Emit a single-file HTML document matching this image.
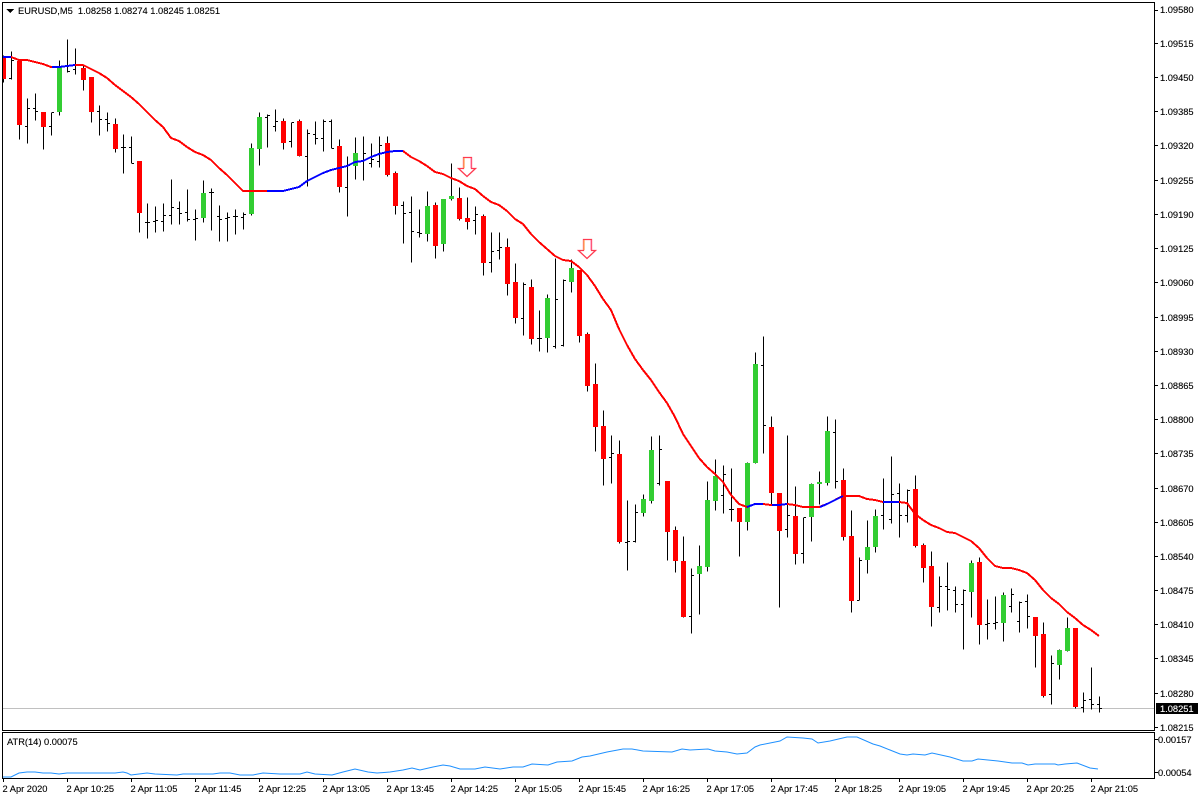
<!DOCTYPE html>
<html><head><meta charset="utf-8"><title>EURUSD,M5</title>
<style>
html,body{margin:0;padding:0;background:#fff;width:1200px;height:800px;overflow:hidden}
svg{display:block}
text{font-family:"Liberation Sans",sans-serif;font-size:9.3px;fill:#000;white-space:pre;stroke:#000;stroke-width:.12px}
.c{shape-rendering:crispEdges}
</style></head><body>
<svg width="1200" height="800" viewBox="0 0 1200 800" xmlns="http://www.w3.org/2000/svg">
<rect width="1200" height="800" fill="#fff"/>
<g class="c">
<path d="M3 708.5H1154" stroke="#c0c0c0" fill="none"/>
<g transform="translate(0 .5)" fill="none" stroke="#000" stroke-width="1">
<path d="M3.5 55V82M11.5 51V79M9 78h2M12 60h2M19.5 60V139M27.5 98V143M25 126h2M28 108h2M35.5 93V120M33 108h2M36 111h2M43.5 112V149M51.5 112V135M49 126h2M52 112h2M59.5 60V115M67.5 39V72M65 66h2M68 71h2M75.5 48V74M73 69h2M76 65h2M83.5 65V90M91.5 77V122M99.5 105V135M97 111h2M100 119h2M107.5 112V131M105 119h2M108 123h2M115.5 118V152M123.5 134V173M121 147h2M124 147h2M131.5 136V163M129 147h2M132 163h2M139.5 161V232M147.5 203V238M145 222h2M148 222h2M155.5 206V232M153 221h2M156 220h2M163.5 203V231M161 221h2M164 215h2M171.5 179V224M169 215h2M172 207h2M179.5 201V224M177 208h2M180 213h2M187.5 189V221M185 212h2M188 219h2M195.5 209V240M193 219h2M196 218h2M203.5 180V222M211.5 188V230M209 192h2M212 192h2M219.5 205V241M217 216h2M220 219h2M227.5 212V241M225 218h2M228 217h2M235.5 209V234M233 216h2M236 216h2M243.5 212V229M241 217h2M244 214h2M251.5 143V215M259.5 112V165M267.5 114V147M265 117h2M268 115h2M275.5 109V131M273 126h2M276 121h2M283.5 118V149M291.5 122V147M289 141h2M292 122h2M299.5 119V156"/>
<path d="M307.5 129V186M305 156h2M308 133h2M315.5 121V144M313 134h2M316 138h2M323.5 119V151M321 138h2M324 121h2M331.5 119V148M329 121h2M332 148h2M339.5 139V192M347.5 156V216M345 187h2M348 165h2M355.5 137V179M363.5 136V180M361 161h2M364 153h2M371.5 143V167M369 163h2M372 159h2M379.5 136V167M377 161h2M380 145h2M387.5 136V176M395.5 171V214M403.5 201V243M401 205h2M404 213h2M411.5 196V262M409 212h2M412 231h2M419.5 209V237M417 232h2M420 233h2M427.5 191V241M435.5 202V258M443.5 199V251M451.5 163V200M459.5 187V220M467.5 197V229M475.5 206V234M473 220h2M476 214h2M483.5 214V275M491.5 232V272M489 262h2M492 251h2M499.5 232V259M497 250h2M500 247h2M507.5 238V295M515.5 263V323M523.5 282V335M521 318h2M524 284h2M531.5 279V344M539.5 310V351M537 338h2M540 338h2M547.5 294V352M555.5 258V348M553 346h2M556 299h2M563.5 279V346M561 345h2M564 280h2M571.5 259V292M579.5 270V342"/>
<path d="M587.5 332V391M595.5 363V451M603.5 410V485M611.5 435V483M609 457h2M612 453h2M619.5 440V543M627.5 500V570M625 542h2M628 541h2M635.5 504V542M633 541h2M636 512h2M643.5 494V516M651.5 436V503M659.5 435V485M657 483h2M660 449h2M667.5 481V560M675.5 526V572M683.5 536V617M691.5 568V633M689 616h2M692 575h2M699.5 545V614M707.5 481V571M715.5 459V510M723.5 465V513M721 495h2M724 474h2M731.5 468V521M729 509h2M732 509h2M739.5 508V556M747.5 462V530M755.5 352V463M763.5 336V453M761 365h2M764 425h2M771.5 416V505M779.5 493V607M787.5 435V537M785 529h2M788 515h2M795.5 486V564M803.5 517V563M801 553h2M804 517h2M811.5 483V541M819.5 471V504M827.5 416V485M835.5 419V488M833 432h2M836 481h2"/>
<path d="M843.5 468V540M851.5 510V612M859.5 557V600M857 600h2M860 560h2M867.5 520V573M875.5 509V552M883.5 478V529M881 515h2M884 501h2M891.5 456V523M889 519h2M892 494h2M899.5 483V537M897 493h2M900 515h2M907.5 489V522M905 515h2M908 490h2M915.5 475V547M923.5 543V582M931.5 551V626M939.5 576V612M937 607h2M940 586h2M947.5 562V610M945 586h2M948 589h2M955.5 586V612M953 590h2M956 604h2M963.5 589V649M961 604h2M964 590h2M971.5 560V617M979.5 557V644M987.5 599V639M985 624h2M988 623h2M995.5 596V629M993 623h2M996 622h2M1003.5 592V641M1011.5 588V612M1009 606h2M1012 594h2M1019.5 601V632M1017 621h2M1020 602h2M1027.5 594V628M1025 601h2M1028 616h2M1035.5 617V667M1043.5 622V697M1051.5 655V704M1049 694h2M1052 663h2M1059.5 649V679M1067.5 617V651M1075.5 628V708M1083.5 692V712M1081 707h2M1084 700h2M1091.5 667V709M1089 699h2M1092 704h2M1099.5 696V712M1097 704h2M1100 708h2"/>
</g>
<path fill="#ff0000" d="M3 58h3v21h-3zM17 61h5v64h-5zM41 112h5v15h-5zM81 68h5v12h-5zM89 77h5v35h-5zM113 124h5v25h-5zM137 161h5v52h-5zM281 121h5v22h-5zM297 121h5v35h-5zM337 146h5v41h-5zM385 143h5v32h-5zM393 173h5v33h-5zM433 205h5v41h-5zM457 198h5v21h-5zM465 218h5v4h-5zM481 216h5v47h-5zM505 247h5v37h-5zM513 282h5v36h-5zM529 287h5v52h-5zM577 270h5v66h-5zM585 334h5v52h-5zM593 384h5v43h-5zM601 426h5v33h-5zM617 454h5v88h-5zM665 481h5v51h-5zM673 530h5v31h-5zM681 561h5v56h-5zM737 508h5v14h-5zM769 427h5v66h-5zM777 493h5v38h-5zM793 516h5v38h-5zM841 480h5v57h-5zM849 536h5v65h-5zM913 489h5v57h-5zM921 545h5v23h-5zM929 566h5v41h-5zM977 562h5v63h-5zM1033 617h5v19h-5zM1041 634h5v62h-5zM1073 628h5v79h-5z"/>
<path fill="#32cd32" d="M57 67h5v45h-5zM201 193h5v25h-5zM249 148h5v66h-5zM257 117h5v32h-5zM353 153h5v13h-5zM425 206h5v28h-5zM441 199h5v45h-5zM449 196h5v3h-5zM545 298h5v40h-5zM569 268h5v14h-5zM641 499h5v14h-5zM649 450h5v51h-5zM697 566h5v8h-5zM705 500h5v67h-5zM713 476h5v25h-5zM745 463h5v59h-5zM753 364h5v99h-5zM809 484h5v33h-5zM817 482h5v2h-5zM825 431h5v52h-5zM865 547h5v13h-5zM873 516h5v31h-5zM969 563h5v29h-5zM1001 595h5v28h-5zM1057 650h5v15h-5zM1065 628h5v23h-5z"/>
<polyline fill="none" stroke="#ff0000" stroke-width="2" points="3,57 11,57 19,60 27,60 35,62 43,64 51,67 59,67 67,66 75,65 83,65 91,69 99,73 107,78 115,85 123,91 131,97 139,104 147,112 155,120 163,127 171,138 179,141 187,147 195,152 203,155 211,160 219,168 227,175 235,183 243,191 267,191 283,191 291,189 299,187 307,181 315,177 323,173 331,170 339,168 347,166 355,162 363,161 371,157 379,154 387,152 395,151 403,151 411,157 419,161 427,166 435,172 443,174 451,178 459,181 467,186 475,189 483,196 491,202 499,205 507,211 515,219 523,224 531,234 539,242 547,249 555,256 563,260 571,261 579,267 587,275 595,286 603,299 611,310 619,329 627,345 635,359 643,370 651,380 659,392 667,403 675,417 683,434 691,446 699,458 707,467 715,474 723,482 731,495 739,504 747,507 755,504 763,504 771,505 779,505 787,504 795,505 803,507 811,507 819,507 827,504 835,500 843,496 851,496 859,496 867,499 875,500 883,502 891,502 899,502 907,503 915,514 923,520 931,525 939,528 947,532 955,533 963,537 971,541 979,548 987,558 995,566 1003,568 1011,568 1019,570 1027,573 1035,580 1043,590 1051,598 1059,604 1067,612 1075,618 1083,625 1091,630 1099,636"/>
<g fill="none" stroke="#0000ff" stroke-width="2">
<polyline points="3,57 11,57"/>
<polyline points="52,67 59,67 67,66 75,65"/>
<polyline points="267,191 283,191 291,189 299,187 307,181 315,177 323,173 331,170 339,168 347,166 355,162 363,161 371,157 379,154 387,152 395,151 403,151"/>
<polyline points="747,507 755,504 763,504"/>
<polyline points="772,505 779,505 787,504"/>
<polyline points="820,507 827,504 835,500 843,496"/>
<polyline points="883,502 891,502 899,502"/>
</g>
</g>
<g id="arrow1">
<path d="M463.5 157.5h8v11h4l-8.500 8-8.500-8h5z" fill="#fff" stroke="#ff3a50" stroke-width="1.300"/>
<path d="M464 158v10" stroke="#ffa860" stroke-width="1.400" fill="none"/>
<path d="M471 158v10" stroke="#ff70a0" stroke-width="1" fill="none"/>
</g>
<g transform="translate(120 82)">
<path d="M463.5 157.5h8v11h4l-8.500 8-8.500-8h5z" fill="#fff" stroke="#ff3a50" stroke-width="1.300"/>
<path d="M464 158v10" stroke="#ffa860" stroke-width="1.400" fill="none"/>
<path d="M471 158v10" stroke="#ff70a0" stroke-width="1" fill="none"/>
</g>
<polyline fill="none" stroke="#1e90ff" stroke-width="1" points="3,777 11,777 19,773 27,772 35,772 43,773 51,773 59,774 67,773 115,773 123,772 127,773 131,775 139,774 147,773 155,774 177,775 183,774 213,774 220,773 230,773 240,775 253,775 263,773 280,774 300,774 307,772 315,774 332,775 343,772 355,769 368,772 377,773 390,772 403,770 412,768 420,770 433,767 443,765 450,766 460,769 475,769 485,767 500,769 513,767 523,767 532,764 548,765 557,762 572,761 582,757 590,756 607,752 623,749 632,749 643,751 672,752 682,749 690,750 708,749 715,751 727,752 737,754 747,753 755,747 760,745 780,741 787,737 803,738 812,739 818,743 830,741 847,737 857,737 873,744 880,746 890,750 900,754 907,755 913,754 925,755 932,753 950,757 963,761 972,761 978,759 998,761 1012,763 1022,763 1028,765 1035,764 1055,764 1058,765 1065,764 1077,763 1090,768 1098,769"/>
<g class="c" fill="none" stroke="#000" stroke-width="1">
<path d="M2.500 2.500H1154.500V730.500H2.500Z"/>
<path d="M2.500 732.500H1154.500V778.500H2.500Z"/>
<path d="M1155 10.500h3M1155 43.500h3M1155 77.500h3M1155 111.500h3M1155 145.500h3M1155 180.500h3M1155 214.500h3M1155 248.500h3M1155 282.500h3M1155 317.500h3M1155 351.500h3M1155 385.500h3M1155 419.500h3M1155 453.500h3M1155 488.500h3M1155 522.500h3M1155 556.500h3M1155 590.500h3M1155 624.500h3M1155 658.500h3M1155 693.500h3M1155 727.500h3M1155 739.500h3M1155 772.500h3"/>
<path d="M3.500 779v3M67.500 779v3M131.500 779v3M195.500 779v3M259.500 779v3M323.500 779v3M387.500 779v3M451.500 779v3M515.500 779v3M579.500 779v3M643.500 779v3M707.500 779v3M771.500 779v3M835.500 779v3M899.500 779v3M963.500 779v3M1027.500 779v3M1091.500 779v3"/>
</g>
<path class="c" d="M6 9h8l-4 4z" fill="#000"/>
<text x="18" y="14">EURUSD,M5  1.08258 1.08274 1.08245 1.08251</text>
<text x="7" y="745">ATR(14) 0.00075</text>
<rect class="c" x="1156" y="703" width="42" height="11" fill="#000"/>
<g>
<text x="1160" y="13">1.09580</text><text x="1160" y="47">1.09515</text><text x="1160" y="81">1.09450</text><text x="1160" y="115">1.09385</text><text x="1160" y="149">1.09320</text><text x="1160" y="184">1.09255</text><text x="1160" y="218">1.09190</text><text x="1160" y="252">1.09125</text><text x="1160" y="286">1.09060</text><text x="1160" y="321">1.08995</text><text x="1160" y="355">1.08930</text><text x="1160" y="389">1.08865</text><text x="1160" y="423">1.08800</text><text x="1160" y="457">1.08735</text><text x="1160" y="492">1.08670</text><text x="1160" y="526">1.08605</text><text x="1160" y="560">1.08540</text><text x="1160" y="594">1.08475</text><text x="1160" y="628">1.08410</text><text x="1160" y="662">1.08345</text><text x="1160" y="697">1.08280</text><text x="1160" y="712" style="fill:#fff;stroke:#fff">1.08251</text><text x="1160" y="731">1.08215</text>
<text x="1158" y="743">0.00157</text><text x="1158" y="776">0.00054</text>
</g>
<g>
<text x="2.500" y="792">2 Apr 2020</text><text x="66.500" y="792">2 Apr 10:25</text><text x="130.500" y="792">2 Apr 11:05</text><text x="194.500" y="792">2 Apr 11:45</text><text x="258.500" y="792">2 Apr 12:25</text><text x="322.500" y="792">2 Apr 13:05</text><text x="386.500" y="792">2 Apr 13:45</text><text x="450.500" y="792">2 Apr 14:25</text><text x="514.500" y="792">2 Apr 15:05</text><text x="578.500" y="792">2 Apr 15:45</text><text x="642.500" y="792">2 Apr 16:25</text><text x="706.500" y="792">2 Apr 17:05</text><text x="770.500" y="792">2 Apr 17:45</text><text x="834.500" y="792">2 Apr 18:25</text><text x="898.500" y="792">2 Apr 19:05</text><text x="962.500" y="792">2 Apr 19:45</text><text x="1026.500" y="792">2 Apr 20:25</text><text x="1090.500" y="792">2 Apr 21:05</text>
</g>
</svg>
</body></html>
